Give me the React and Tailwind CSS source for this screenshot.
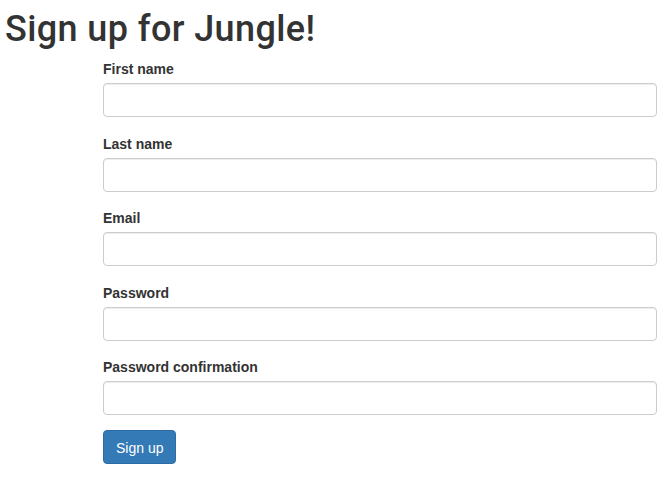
const fields = [
  { label: "First name", type: "text" },
  { label: "Last name", type: "text" },
  { label: "Email", type: "email" },
  { label: "Password", type: "password" },
  { label: "Password confirmation", type: "password" },
];

export default function App() {
  return (
    <div
      className="min-h-screen bg-white text-[#333333]"
      style={{ fontFamily: '"Liberation Sans", Arial, Helvetica, sans-serif' }}
    >
      <h1 className="pt-[9px] pl-[5px] text-[36px] leading-[40px] tracking-[0.4px] font-medium font-['Roboto',sans-serif]">
        Sign up for Jungle!
      </h1>

      <form className="flex flex-col pl-[103px] pr-[14px] pt-[10px]">
        {fields.map((f, i) => (
          <div
            key={f.label}
            className={i === fields.length - 1 ? "flex flex-col mb-[15px]" : "flex flex-col mb-[16.5px]"}
          >
            <label className="text-[14px] leading-[20px] font-bold mb-[4px]">{f.label}</label>
            <input
              type={f.type}
              className="h-[34px] w-full rounded-[4px] border border-[#cccccc] bg-white px-3 text-[14px] shadow-[inset_0_1px_1px_rgba(0,0,0,0.075)] outline-none"
            />
          </div>
        ))}

        <div>
          <button
            type="button"
            className="h-[34px] rounded-[4px] border border-[#2e6da4] bg-[#337ab7] px-[12px] pt-[1px] text-[14px] leading-[20px] text-white"
          >
            Sign up
          </button>
        </div>
      </form>
    </div>
  );
}
